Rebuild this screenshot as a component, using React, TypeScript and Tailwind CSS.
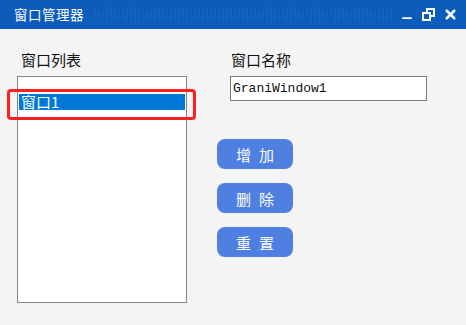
import { Minus, X } from "lucide-react";

const cjk = "font-['Noto_Sans_CJK_SC',sans-serif]";

// heights of the little grip lines in the title bar
const grip = [8, 12, 16, 14, 6, 10, 16, 11, 6, 10, 15, 14, 6, 11, 16, 10, 6, 15, 12];

function TitleGrip() {
  const lines = [];
  for (let i = 0; i < 75; i++) {
    const h = grip[(i * 7 + (i % 3)) % grip.length];
    const x = 2 + i * 4;
    lines.push(
      <line key={i} x1={x} x2={x} y1={14.5 - h / 2} y2={14.5 + h / 2} stroke="#3c7fd0" strokeWidth="1" opacity="0.4" />
    );
  }
  return (
    <svg width="300" height="29" className="shrink-0">
      {lines}
    </svg>
  );
}

function RestoreIcon() {
  return (
    <svg width="13" height="13" viewBox="0 0 13 13" className="shrink-0">
      <rect x="5" y="1" width="7" height="7" fill="none" stroke="white" strokeWidth="2" />
      <rect x="1" y="5" width="7" height="7" fill="#0b5cbb" stroke="white" strokeWidth="2" />
    </svg>
  );
}

function Btn({ label }: { label: string }) {
  return (
    <button className={`w-[76px] h-[30px] rounded-[8px] bg-[#4f80e1] text-white text-[15px] leading-none tracking-[8px] pl-[8px] ${cjk}`}>
      {label}
    </button>
  );
}

export default function App() {
  return (
    <div className="w-[466px] h-[325px] bg-[#f4f4f4] flex flex-col overflow-hidden">
      <div className="h-[29px] bg-[#0b5cbb] flex items-center text-white">
        <span className={`ml-[14px] text-[13.5px] leading-none tracking-[0.5px] ${cjk}`}>窗口管理器</span>
        <div className="ml-[9px]">
          <TitleGrip />
        </div>
        <div className="ml-auto mr-[8px] flex items-center gap-[8px]">
          <Minus className="size-[14px] mt-[6px]" strokeWidth={3} />
          <RestoreIcon />
          <X className="size-[15px]" strokeWidth={4} />
        </div>
      </div>

      <div className="flex pl-[17px] pt-[21px]">
        <div className="w-[170px] flex flex-col">
          <span className={`pl-[4px] text-[15px] leading-[20px] text-[#111] ${cjk}`}>窗口列表</span>
          <div className="relative mt-[6px] h-[227px] border border-[#85858f] bg-white pt-[17px] px-[1px]">
            <div className={`h-[16px] bg-[#0078d7] text-white text-[15px] leading-[16px] pl-[2px] ${cjk}`}>窗口1</div>
            <div className="absolute left-[-11px] top-[12px] w-[189px] h-[31px] border-[3px] border-[#ff1f1f] rounded-[4px]" />
          </div>
        </div>

        <div className="ml-[30px] flex flex-col">
          <span className={`ml-[14px] text-[15px] leading-[20px] text-[#111] ${cjk}`}>窗口名称</span>
          <div className="ml-[13px] mt-[6px] w-[197px] h-[25px] border border-[#7a7a7a] bg-white flex items-center pl-[2px]">
            <span className="font-['Liberation_Mono',monospace] text-[13px] text-[#111]">GraniWindow1</span>
          </div>
          <div className="mt-[38px] flex flex-col gap-[14px]">
            <Btn label="增加" />
            <Btn label="删除" />
            <Btn label="重置" />
          </div>
        </div>
      </div>
    </div>
  );
}
